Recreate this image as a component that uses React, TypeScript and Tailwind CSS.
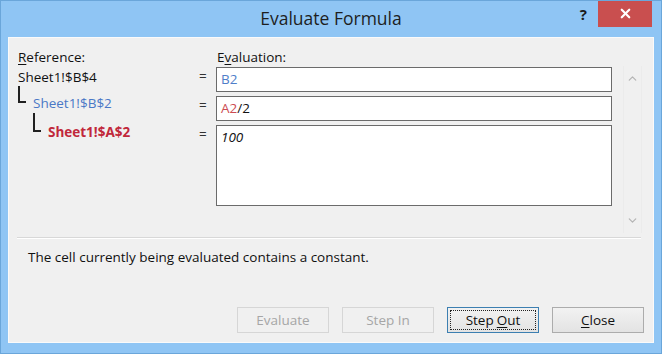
import { ChevronUp, ChevronDown, X } from "lucide-react";

const font = { fontFamily: '"Open Sans", "Liberation Sans", sans-serif' };

function Btn({
  children,
  kind,
}: {
  children: React.ReactNode;
  kind: "disabled" | "focus" | "normal";
}) {
  if (kind === "disabled") {
    return (
      <div className="w-[92px] h-[26px] flex items-center justify-center border border-[#d6d6d6] bg-[#f0f0f0] text-[13.5px] text-[#a6a6a6]">
        {children}
      </div>
    );
  }
  if (kind === "focus") {
    return (
      <div className="w-[92px] h-[26px] p-[2px] border border-[#3c7fb1] bg-gradient-to-b from-[#f2f2f2] to-[#e3e3e3]">
        <div className="w-full h-full flex items-center justify-center border border-dotted border-[#222] text-[13.5px] text-[#111]">
          {children}
        </div>
      </div>
    );
  }
  return (
    <div className="w-[92px] h-[26px] flex items-center justify-center border border-[#acacac] bg-gradient-to-b from-[#f2f2f2] to-[#e3e3e3] text-[13.5px] text-[#111]">
      {children}
    </div>
  );
}

export default function App() {
  return (
    <div
      className="w-[662px] h-[354px] bg-[#8fc5f4] border border-[#6aa6da] flex flex-col overflow-hidden"
      style={font}
    >
      {/* title bar */}
      <div className="h-[36px] flex flex-row">
        <div className="flex-1" />
        <div className="pt-[6px] text-[17.5px] text-[#1e1e1e] leading-[22px]">Evaluate Formula</div>
        <div className="flex-1 flex flex-row justify-end items-start">
          <div className="mt-[3px] mr-[11px] text-[15px] font-bold text-[#1b1b1b] leading-[20px]">?</div>
          <div className="w-[54px] h-[27px] -mt-[1px] mr-[9px] bg-[#c94f4f] flex items-center justify-center">
            <X className="w-[15px] h-[15px] text-white" strokeWidth={3.5} />
          </div>
        </div>
      </div>

      {/* client */}
      <div className="mx-[7px] mb-[10px] flex-1 bg-[#f0f0f0] border border-[#fafafa] flex flex-col">
        <div className="pt-[11px] pl-[9px] flex flex-row text-[13.5px] leading-[16px] text-[#111]">
          <div className="w-[199px]">
            <span className="underline underline-offset-2">R</span>eference:
          </div>
          <div>
            E<span className="underline underline-offset-2">v</span>aluation:
          </div>
        </div>

        <div className="mt-[1px] h-[167px] pl-[9px] flex flex-row">
          {/* reference tree */}
          <div className="w-[177px] pt-[3px] flex flex-col text-[13.5px] leading-[16px]">
            <div className="text-[#111]">Sheet1!$B$4</div>
            <div className="flex flex-row items-start">
              <div className="mt-[1px] w-[8px] h-[17px] border-l-2 border-b-2 border-[#202020]" />
              <div className="mt-[10px] ml-[7px] text-[#4a78c6]">Sheet1!$B$2</div>
            </div>
            <div className="flex flex-row items-start">
              <div className="ml-[15px] mt-[2px] w-[8px] h-[19px] border-l-2 border-b-2 border-[#202020]" />
              <div className="mt-[13px] ml-[7px] font-bold text-[#c1283b]">Sheet1!$A$2</div>
            </div>
          </div>

          {/* equals */}
          <div className="w-[21px] pt-[1px] pl-[4px] flex flex-col gap-[4px] text-[13.5px] leading-[16px] text-[#333]">
            <div className="h-[25px] pt-[1px]">=</div>
            <div className="h-[25px] pt-[1px]">=</div>
            <div className="h-[81px] pt-[1px]">=</div>
          </div>

          {/* evaluation boxes */}
          <div className="w-[396px] pt-[1px] flex flex-col gap-[4px] text-[13.5px] leading-[16px]">
            <div className="h-[25px] bg-white border border-[#6b6b6b] px-[4px] pt-[3px] text-[#4f7ec9]">B2</div>
            <div className="h-[25px] bg-white border border-[#6b6b6b] px-[4px] pt-[3px] text-[#111]">
              <span className="text-[#cc4b52]">A2</span>/2
            </div>
            <div className="h-[81px] bg-white border border-[#6b6b6b] px-[4px] pt-[3px] italic text-[#111]">100</div>
          </div>

          {/* scroll strip */}
          <div className="ml-[11px] w-[19px] flex flex-col items-center justify-between py-[6px] border-l border-r border-[#ebebeb]">
            <ChevronUp className="w-[13px] h-[13px] text-[#b4b4b4]" strokeWidth={2.25} />
            <ChevronDown className="w-[13px] h-[13px] text-[#b4b4b4]" strokeWidth={2.25} />
          </div>
        </div>

        <div className="mt-[4px] ml-[8px] mr-[12px] h-[2px] border-t border-[#d8d8d8] border-b border-b-white" />

        <div className="mt-[10px] pl-[19px] text-[13.5px] leading-[16px] text-[#111]">
          The cell currently being evaluated contains a constant.
        </div>

        <div className="flex-1" />

        <div className="pb-[9px] pr-[9px] flex flex-row justify-end gap-[13px]">
          <Btn kind="disabled">Evaluate</Btn>
          <Btn kind="disabled">Step In</Btn>
          <Btn kind="focus">
            Step <span className="underline underline-offset-2 ml-[3px]">O</span>ut
          </Btn>
          <Btn kind="normal">
            <span className="underline underline-offset-2">C</span>lose
          </Btn>
        </div>
      </div>
    </div>
  );
}
